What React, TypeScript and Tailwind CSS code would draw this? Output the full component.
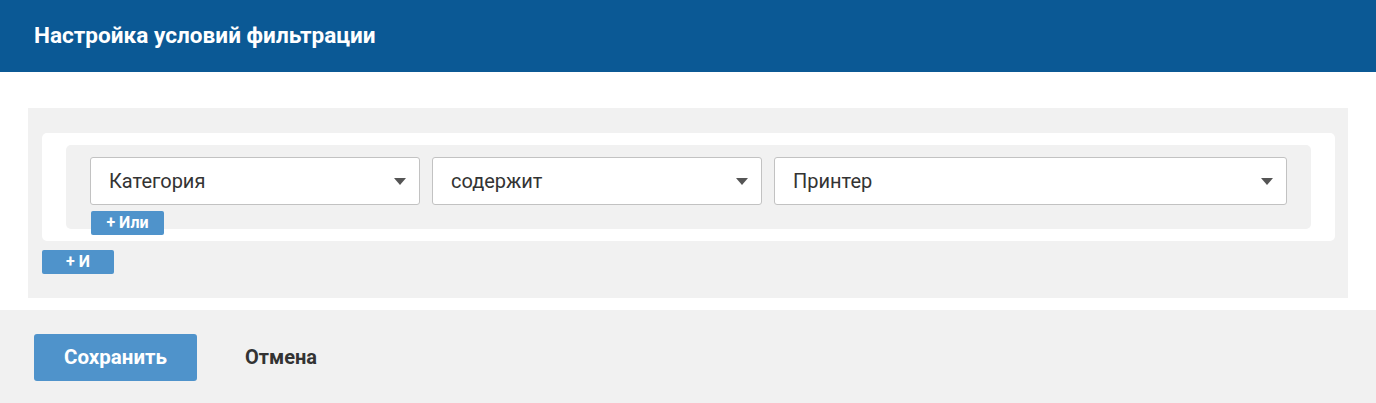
import React from "react";

const Arrow = () => (
  <svg width="12" height="7" viewBox="0 0 12 7" className="shrink-0">
    <path d="M0 0 L12 0 L6 7 Z" fill="#555555" />
  </svg>
);

const Select = ({ label, className }: { label: string; className: string }) => (
  <div
    className={`h-[48px] bg-white border border-[#c2c2c2] rounded-[3px] flex items-center justify-between pl-[18px] pr-[13px] ${className}`}
  >
    <span className="text-[20px] text-[#333333]">{label}</span>
    <Arrow />
  </div>
);

export default function App() {
  return (
    <div className="w-[1376px] h-[403px] bg-white flex flex-col" style={{ fontFamily: "Roboto, 'Noto Sans', sans-serif" }}>
      <div className="h-[72px] bg-[#0b5995] flex items-center pl-[34px] shrink-0">
        <h1 className="text-white text-[22.6px] font-bold">Настройка условий фильтрации</h1>
      </div>
      <div className="pt-[36px] pb-[12px] px-[28px]">
        <div className="bg-[#f1f1f1] pt-[25px] pb-[24px] pl-[14px] pr-[13px] h-[190px] flex flex-col items-start">
          <div className="bg-white rounded-[5px] py-[12px] px-[24px] self-stretch flex flex-col">
            <div className="bg-[#f1f1f1] rounded-[5px] pt-[12px] px-[24px] flex flex-col items-start">
              <div className="flex gap-[12px] self-stretch">
                <Select label="Категория" className="w-[330px]" />
                <Select label="содержит" className="w-[330px]" />
                <Select label="Принтер" className="flex-1" />
              </div>
              <button className="mt-[6px] -mb-[6px] ml-[1px] h-[24px] w-[73px] bg-[#4f93cb] text-white text-[16px] font-bold rounded-[2px] flex items-center justify-center relative">
                + Или
              </button>
            </div>
          </div>
          <button className="mt-[9px] h-[24px] w-[72px] bg-[#4f93cb] text-white text-[16px] font-bold rounded-[2px] flex items-center justify-center">
            + И
          </button>
        </div>
      </div>
      <div className="flex-1 bg-[#f1f1f1] flex items-center pl-[34px] pt-[1px]">
        <button className="h-[47px] w-[163px] bg-[#4f93cb] text-white text-[20.5px] font-bold rounded-[3px]">
          Сохранить
        </button>
        <span className="ml-[48px] text-[20px] font-bold text-[#333333]">Отмена</span>
      </div>
    </div>
  );
}
